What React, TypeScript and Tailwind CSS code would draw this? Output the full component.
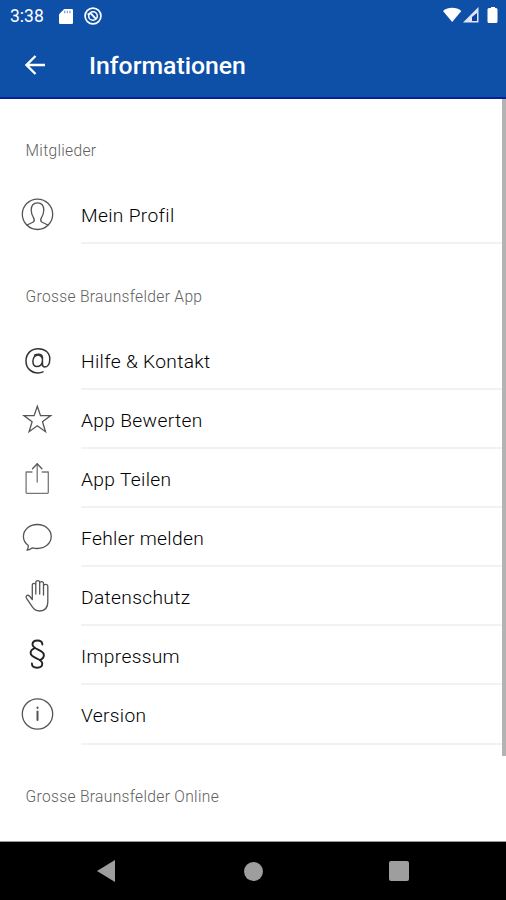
import type { ReactNode } from 'react';

type Item = { label: string; icon: ReactNode };
type Section = { title: string; items: Item[] };

function LineIcon({ children }: { children: ReactNode }) {
  return (
    <svg
      viewBox="0 0 34 34"
      className="h-[34px] w-[34px]"
      fill="none"
      stroke="#555"
      strokeWidth="1.3"
      strokeLinecap="round"
      strokeLinejoin="round"
    >
      {children}
    </svg>
  );
}

const SECTIONS: Section[] = [
  {
    title: 'Mitglieder',
    items: [
      {
        label: 'Mein Profil',
        icon: (
          <LineIcon>
            <circle cx="17.5" cy="17.3" r="15.2" />
            <path d="M7.3 28.1c1.7-1.5 4.500-2 6-3.100 1.300-1 1.200-2.600.2-4.300-1.600-2.600-2.300-4.700-2.300-7.600 0-4.500 2.400-7.300 6.300-7.300s6.300 2.800 6.300 7.300c0 2.900-.7 5-2.300 7.600-1 1.700-1.100 3.300.2 4.300 1.500 1.100 4.300 1.600 6 3.100" />
          </LineIcon>
        ),
      },
    ],
  },
  {
    title: 'Grosse Braunsfelder App',
    items: [
      {
        label: 'Hilfe & Kontakt',
        icon: (
          <LineIcon>
            <g stroke="#333" strokeWidth="1.5">
              <path d="M23 28.900c-1.500.7-3 1-4.800 1-7.200 0-12.200-4.800-12.200-12C6 10.700 11 5.700 18.200 5.700c7 0 11.600 4.200 11.600 10.300 0 5.100-2.200 8-4.800 8-1.700 0-2.600-1.100-2.600-3v-6.500c0-2-1.500-3.200-4-3.200-1.500 0-2.900.3-3.900.8" />
              <path d="M22.400 15.200c-1-2-2.300-3.200-4.300-3.200-3 0-5.200 2.800-5.200 6.200 0 3.300 1.600 5.300 4.100 5.300 2.700 0 4.700-1.700 5.400-4.200" />
            </g>
          </LineIcon>
        ),
      },
      {
        label: 'App Bewerten',
        icon: (
          <LineIcon>
            <path
              strokeLinejoin="miter"
              d="M17.300 4.300l3.200 9.300h10.200l-8.200 6.200 3 9.900-8.200-5.900-8.200 5.900 3-9.900-8.200-6.200h10.200z"
            />
          </LineIcon>
        ),
      },
      {
        label: 'App Teilen',
        icon: (
          <LineIcon>
            <path
              stroke="#777"
              d="M12 11H6.100v20.500q0 .8.800.8h20.600q.8 0 .8-.8V11h-6.100M17.200 21V3"
            />
            <path d="M12.500 7.700l4.700-4.900 4.700 4.900" />
          </LineIcon>
        ),
      },
      {
        label: 'Fehler melden',
        icon: (
          <LineIcon>
            <path d="M17.300 4.500c7.800 0 13.900 5.100 13.900 12s-6.100 12-13.900 12c-1.700 0-3.300-.2-4.800-.7-1.700 1.500-3.700 2.300-5.500 2.400 1-1.300 1.500-2.800 1.300-4.700-3-2.200-4.900-5.300-4.900-9 0-6.900 6.100-12 13.900-12z" />
          </LineIcon>
        ),
      },
      {
        label: 'Datenschutz',
        icon: (
          <LineIcon>
            <path d="M12.300 20.500V6.200c0-2.500 3.500-2.500 3.500 0V15M15.800 6.200V3.500c0-2.600 3.900-2.600 3.900 0V15M19.700 4.500c0-2.500 3.800-2.500 3.800 0V16M23.500 7.300c0-2.500 4.300-2.500 4.300 0V23c0 5.400-2.900 9-8.100 9-3.600 0-5.900-1.700-7.700-4.600l-5.600-8.200c-1.300-2.400 1.200-3.900 3-2.200l2.900 3.500" />
          </LineIcon>
        ),
      },
      {
        label: 'Impressum',
        icon: (
          <LineIcon>
            <g stroke="#222" strokeWidth="1.9">
              <path d="M22.400 6.500c0-2.600-1.900-4-4.900-4s-5 1.600-5 4.100c0 5.300 11.400 5 11.400 10.500 0 2.300-1.500 3.900-3.600 4.700" />
              <path d="M11.900 25.500c0 2.700 2.100 4.200 5.200 4.200s5.200-1.600 5.200-4.200c0-5.300-11.700-5-11.700-10.500 0-2.300 1.500-3.900 3.700-4.700" />
            </g>
          </LineIcon>
        ),
      },
      {
        label: 'Version',
        icon: (
          <LineIcon>
            <circle cx="17.5" cy="17" r="15.2" />
            <path d="M17.500 14.500v8.500M17.500 10.500v.4" strokeWidth="2" />
          </LineIcon>
        ),
      },
    ],
  },
  { title: 'Grosse Braunsfelder Online', items: [] },
];

function StatusBar() {
  return (
    <div className="flex h-8 items-center pl-[10px] pr-2 text-white">
      <span className="w-[49px] pt-0.5 text-[17.5px] leading-none">3:38</span>
      <svg viewBox="0 0 16 18" className="-mt-px h-4 w-[14px]" preserveAspectRatio="none">
        <path d="M6 1h8.500q1.500 0 1.500 1.500v14q0 1.500-1.500 1.500h-13Q0 18 0 16.500V7z" fill="#fff" />
        <path d="M6.500 3v3M9.500 3v3M12.500 3v3" stroke="#7296cb" strokeWidth="1.3" />
      </svg>
      <svg viewBox="0 0 20 20" className="-mt-px ml-[11px] h-[18px] w-[18px]" fill="none" stroke="#fff">
        <circle cx="10" cy="10" r="8.8" strokeWidth="1.9" />
        <circle cx="10" cy="10" r="4.8" strokeWidth="1.7" />
        <path d="M4 8.500l3.500-1.500 6 6.500" strokeWidth="2" />
      </svg>
      <svg viewBox="0 0 56 18" className="-mt-0.5 ml-auto h-[18px] w-[56px]">
        <path d="M1 5C6 .6 14.500 .6 19.300 5L10.200 16z" fill="#fff" />
        <path d="M36.500 1v15.500H21z" fill="#dce5f3" />
        <path d="M35 7v8h-5v-4z" fill="#0e3fa4" />
        <path d="M47 2h2V1h4v1h1q1.500 0 1.500 1.500v12Q55.500 17 54 17h-7q-1.500 0-1.500-1.500v-12Q45.500 2 47 2z" fill="#fff" />
      </svg>
    </div>
  );
}

function Row({ label, icon }: Item) {
  return (
    <div className="flex h-[59.1px] items-stretch">
      <div className="flex w-[81px] shrink-0 items-center pb-px pl-[19.5px]">{icon}</div>
      <div className="flex flex-1 items-center border-b-2 border-[#f2f2f2] pt-[5px] text-[19.2px] font-light tracking-[0.33px] text-black">
        {label}
      </div>
    </div>
  );
}

export default function App() {
  return (
    <div className="flex h-[900px] w-[506px] flex-col overflow-hidden bg-white font-['Roboto',sans-serif]">
      <header className="h-[99px] shrink-0 border-b-2 border-[#08209a] bg-[#0e50a8]">
        <StatusBar />
        <div className="flex h-[66px] items-center pl-[25px] text-white">
          <svg viewBox="0 0 20 20" className="-mt-px h-5 w-5" fill="none" stroke="#fff" strokeWidth="2.3">
            <path d="M20 10H1.800M10.500 1L1.500 10l9 9" />
          </svg>
          <h1 className="ml-[44px] pt-[3px] text-[24.8px] font-medium leading-none">Informationen</h1>
        </div>
      </header>

      <div className="relative h-[742px] shrink-0 overflow-hidden">
        {SECTIONS.map(({ title, items }) => (
          <section key={title}>
            <h2 className="flex h-[86.4px] items-center pl-[25.5px] pt-[19.5px] text-[15.6px] font-light tracking-[0.32px] text-[#606060]">
              {title}
            </h2>
            {items.map((item) => (
              <Row key={item.label} {...item} />
            ))}
          </section>
        ))}
        {/* Scroll indicator */}
        <div className="absolute right-0 top-0 h-[657px] w-1 bg-[#b3b3b3]" />
      </div>

      <nav className="flex flex-1 items-center justify-between border-t border-[#999] bg-black pl-[97px] pr-[97px]">
        <svg viewBox="0 0 19 22" className="h-[22px] w-[18px]" preserveAspectRatio="none">
          <path d="M19 0v22L0 11z" fill="#9e9e9e" />
        </svg>
        <div className="ml-0.5 h-[19px] w-[19px] rounded-full bg-[#9e9e9e]" />
        <div className="h-5 w-5 rounded-[2px] bg-[#9e9e9e]" />
      </nav>
    </div>
  );
}
